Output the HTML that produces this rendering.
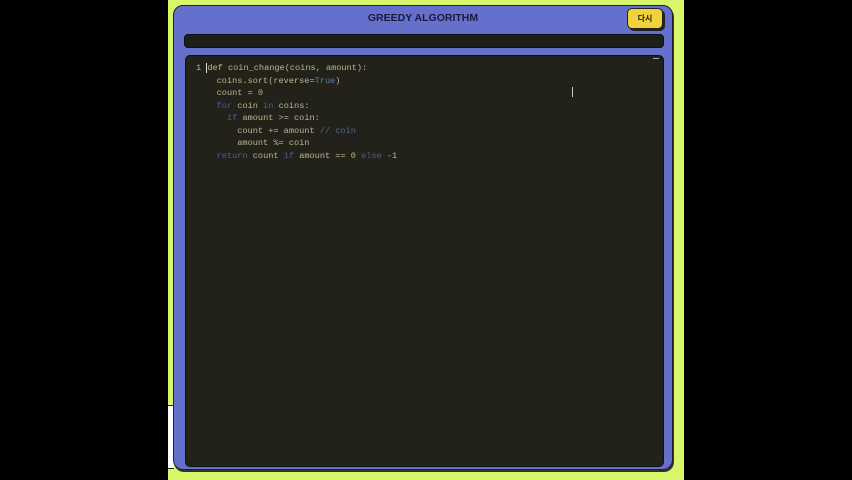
<!DOCTYPE html>
<html><head><meta charset="utf-8"><style>
html,body{margin:0;padding:0}
body{width:852px;height:480px;background:#000;position:relative;overflow:hidden;font-family:"Liberation Sans","Noto Sans CJK KR",sans-serif}
.green{position:absolute;left:168px;top:0;width:516px;height:480px;background:#d8f76a}
.white{position:absolute;left:168px;top:405px;width:6px;height:62px;background:#fff;border-top:1px solid #222;border-bottom:1px solid #222}
.panel{position:absolute;left:173px;top:5px;width:498px;height:463px;background:#6470cc;border:1.5px solid #222;border-radius:10px;box-shadow:1px 2px 0 #333}
.title{position:absolute;left:0;right:0;top:6px;text-align:center;font-weight:bold;font-size:10.5px;color:#1a1a3a}
.btn{position:absolute;left:453px;top:2px;width:34px;height:19px;background:#f0d23a;border:1.5px solid #222;border-radius:5px;box-shadow:2px 2px 0 #222;font-size:8px;font-weight:bold;text-align:center;line-height:19px;color:#222}
.bar{position:absolute;left:10px;top:28px;width:478px;height:12px;background:#1e1e1c;border-radius:4px;border:1px solid #111}
.code{position:absolute;left:11px;top:49px;width:477px;height:410px;background:#22221b;border-radius:5px;border:1px solid #111}
pre{position:absolute;left:10px;top:6px;margin:0;font-family:"Liberation Mono",monospace;font-size:8.6px;line-height:12.5px;color:#b9b98c}
.k{color:#4a5b9c}.c{color:#4e6a8a}.t{color:#5a80a8}
.dash{position:absolute;right:4px;top:2px;width:6px;height:1px;background:#aaa}
.cur{position:absolute;left:572px;top:87px;width:3px;height:10px;border-left:1px solid #ccc}
</style></head><body>
<div class="green"></div>
<div class="white"></div>
<div class="panel">
<div class="title">GREEDY ALGORITHM</div>
<div class="btn">다시</div>
<div class="bar"></div>
<div class="code"><div class="dash"></div>
<pre>1 <span style="border-left:1px solid #ddd">d</span>ef coin_change(coins, amount):
    coins.sort(reverse=<span class="t">True</span>)
    count = 0
    <span class="k">for</span> coin <span class="k">in</span> coins:
      <span class="k">if</span> amount &gt;= coin:
        count += amount <span class="c">// coin</span>
        amount %= coin
    <span class="k">return</span> count <span class="k">if</span> amount == 0 <span class="k">else</span> -1</pre>
</div>
</div>
<div class="cur"></div>
</body></html>
